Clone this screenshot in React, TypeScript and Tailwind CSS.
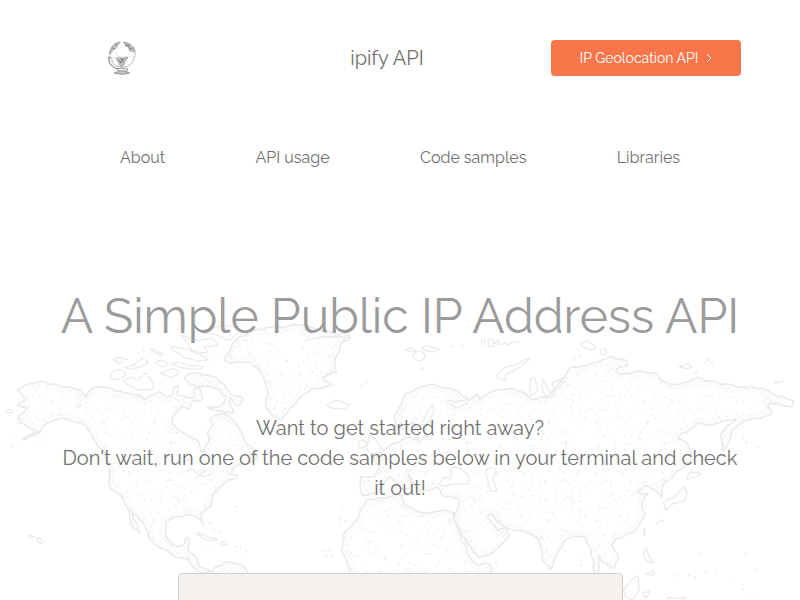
const land: Record<string, string> = {
  northAmerica:
    "50,330 72,318 95,310 125,304 145,313 200,320 245,328 258,350 275,325 300,320 340,326 370,340 400,345 425,345 432,362 445,350 480,335 500,352 520,345 518,325 535,315 530,345 555,350 585,352 580,330 602,325 608,360 575,365 570,388 545,378 520,410 518,435 545,455 590,478 600,500 612,518 628,480 622,460 638,440 630,415 660,403 690,410 715,440 730,480 760,510 778,535 750,548 700,560 690,585 715,588 670,615 640,640 635,680 605,700 612,740 598,715 570,705 520,712 495,725 498,770 520,795 550,795 555,772 568,775 562,805 585,825 595,855 635,877 615,880 585,868 570,845 510,822 450,780 442,750 395,690 405,725 422,762 395,738 385,685 360,645 330,625 326,560 310,510 290,490 260,440 230,425 190,415 150,425 125,440 115,460 65,480 110,455 62,430 55,405 82,385 50,375 75,362",
  southAmerica: "635,880 650,858 690,845 725,852 745,885 750,970 640,970",
  baffin:
    "550,295 560,285 600,278 640,290 670,310 690,340 730,355 712,378 690,352 700,400 620,382 665,378 680,350 650,325 620,320 570,315",
  greenland:
    "670,238 690,215 700,185 740,160 800,142 860,140 890,133 950,148 1052,168 1020,195 1005,240 1012,278 965,290 998,315 930,330 890,365 865,390 845,422 810,402 795,370 805,340 790,290 772,262 740,245 700,250 680,245",
  eurasia:
    "1080,590 1125,592 1140,565 1118,540 1150,510 1180,490 1220,470 1250,480 1290,470 1260,460 1240,425 1215,450 1185,440 1180,410 1205,370 1220,340 1250,325 1300,312 1350,325 1405,355 1370,366 1345,358 1370,385 1400,370 1432,340 1436,362 1470,335 1530,325 1580,340 1600,358 1625,348 1640,355 1670,325 1685,300 1710,262 1750,258 1805,240 1825,230 1880,242 1885,258 1850,265 1860,285 1900,275 1970,278 1980,295 2010,312 2060,308 2090,292 2150,308 2190,315 2250,325 2252,315 2310,335 2355,355 2382,362 2375,382 2335,376 2305,370 2315,405 2270,415 2230,425 2195,450 2190,480 2170,515 2160,465 2180,440 2210,415 2150,430 2120,435 2090,432 2030,475 2065,490 2075,540 2040,570 1990,615 1985,655 1965,630 1940,615 1910,635 1945,642 1925,670 1935,710 1910,750 1850,775 1835,795 1855,830 1845,865 1810,852 1795,825 1795,880 1785,900 1775,815 1755,768 1700,775 1665,830 1652,870 1625,830 1615,775 1590,760 1520,745 1495,725 1470,702 1462,708 1490,752 1515,745 1528,765 1480,820 1435,835 1390,770 1360,715 1372,690 1377,655 1325,648 1315,620 1260,635 1235,600 1225,580 1240,625 1210,630 1170,590 1150,610 1130,640 1085,645",
  africa:
    "1100,658 1205,645 1212,672 1265,697 1325,690 1365,697 1362,718 1390,790 1425,850 1475,855 1468,885 1440,970 1080,970 1052,880 1025,810 1030,765 1065,725 1080,690",
};

const islands = [
  "15,393 28,387 42,393 32,401",
  "65,478 108,456 128,452 102,467",
  "338,240 352,232 376,235 360,249",
  "372,262 400,255 430,235 446,250 420,262 390,268",
  "328,292 340,272 370,270 380,284 352,300",
  "368,300 395,290 410,302 440,278 458,305 460,325 420,332 385,315",
  "450,208 462,206 472,216 492,222 480,228",
  "465,250 480,240 508,252 492,262",
  "478,280 520,265 540,280 515,294",
  "508,200 530,203 560,205 610,230 630,240 590,245 545,228",
  "510,250 540,247 575,258 612,260 600,268 550,265",
  "545,165 580,180 640,175 655,195 610,200 625,218 580,214",
  "605,160 650,140 700,138 720,155 690,182 640,160",
  "588,760 622,770 655,780 622,781",
  "660,790 670,783 686,793 672,796",
  "82,764 95,767 105,773 90,772",
  "108,776 120,772 130,784 124,792 113,786",
  "978,375 1005,360 1050,373 1030,388 1000,386",
  "1072,485 1090,478 1105,492 1082,508",
  "1098,500 1112,465 1130,480 1150,515 1110,520",
  "1214,210 1232,202 1250,210 1238,218",
  "1236,226 1252,212 1270,216 1278,228 1258,244 1246,238",
  "1262,206 1285,196 1300,204 1320,208 1300,216 1280,214",
  "1488,292 1510,265 1560,248 1590,235 1565,260 1515,285 1520,302",
  "1590,295 1605,292 1612,335 1590,350",
  "1632,295 1640,325 1662,345 1640,352 1625,320",
  "1655,308 1680,298 1690,292 1686,318 1662,328",
  "1738,195 1765,180 1792,205 1762,208",
  "1798,212 1818,205 1820,225 1802,224",
  "2035,262 2060,250 2078,262 2060,267",
  "1990,665 2025,650 2050,620 2062,640 2055,662 2020,670 1995,695",
  "2058,600 2070,575 2105,580 2085,592",
  "1930,830 1938,802 1945,825 1962,850 1945,845",
  "1930,745 1938,750 1933,770",
  "1935,882 1965,870 1960,888",
  "1870,925 1900,895 1915,885 1918,925 1900,960 1875,950",
  "1925,938 1950,932 1940,955",
  "2000,950 2030,955 2060,950 2050,962 2010,965",
];

const seas = [
  "1318,612 1335,590 1350,598 1355,560 1385,565 1408,590 1405,610 1360,612 1325,618",
  "1455,570 1480,560 1490,575 1478,595 1492,635 1470,635 1465,600",
  "1252,480 1262,440 1280,400 1300,370 1302,395 1280,430 1275,465 1262,490",
];

const rand = (n: number) => {
  const v = Math.sin(n * 127.1 + 311.7) * 43758.5453;
  return v - Math.floor(v);
};

/** Hand-drawn closed outline: each edge gets shaky in-between points, then all corners are rounded. */
function coast(points: string, wobble: number) {
  const corners = points.split(" ").map((p) => p.split(",").map(Number));
  const pts: number[][] = [];
  corners.forEach(([x, y], i) => {
    const [nx, ny] = corners[(i + 1) % corners.length];
    const length = Math.hypot(nx - x, ny - y);
    const steps = Math.max(1, Math.round(length / 13));
    for (let s = 0; s < steps; s++) {
      const shake = s === 0 ? 0 : wobble;
      const t = s / steps;
      const seed = x * 3 + y * 7 + s;
      pts.push([
        x + (nx - x) * t + (rand(seed) - 0.5) * shake,
        y + (ny - y) * t + (rand(seed + 9) - 0.5) * shake,
      ]);
    }
  });
  const mid = (a: number[], b: number[]) => `${((a[0] + b[0]) / 2).toFixed(1)} ${((a[1] + b[1]) / 2).toFixed(1)}`;
  let d = `M${mid(pts[pts.length - 1], pts[0])}`;
  pts.forEach((p, i) => {
    d += `Q${p[0].toFixed(1)} ${p[1].toFixed(1)} ${mid(p, pts[(i + 1) % pts.length])}`;
  });
  return d + "Z";
}

const landPath = Object.values(land).map((p) => coast(p, 9)).join("");
const islandPath = islands.map((p) => coast(p, 5)).join("");
const seaPath = seas.map((p) => coast(p, 5)).join("");

const dashes = Array.from({ length: 230 }, (_, i) => {
  const x = 6 + rand(i) * 284;
  const y = 6 + rand(i + 500) * 284;
  return `M${x.toFixed(0)} ${y.toFixed(0)}l${(rand(i + 90) * 7 - 2).toFixed(1)} ${(rand(i + 70) * 6 - 2).toFixed(1)}`;
}).join("");

const specks =
  "M30 466h1M52 430h2M38 500h1M120 486h1M380 238h2M415 219h2M430 212h2M705 680h3M628 730h8M640 750h3M655 757h3M624 800h1M706 800h2M720 802h2M738 812v1M737 838v1M1084 318h3M1096 308h4M1265 266h4M1350 198h5M1384 195h3M1028 680h1M1022 716h2M1022 730h2M1036 725h2M974 814h3M990 812h3M976 826h3M992 826h3M1488 846v4M2237 488h5M2272 502h2M2228 474h2M2325 308h12M2346 305h2M1970 730h3M1980 722h8M2095 822h4M2238 821h2M2022 887h2M2066 886h2M2085 892h2M2115 875h2M2150 874h2M2264 868h2M2202 894h1M2228 928h2M2256 950h1M1742 840v1M1744 856v1M2120 240h8M2135 248h3M2085 278h6M1720 235h4M1740 228h4";

function WorldMap() {
  return (
    <svg
      aria-hidden="true"
      viewBox="0 0 2400 960"
      preserveAspectRatio="xMidYMin slice"
      className="absolute inset-x-0 bottom-0 -z-10 w-full"
      fill="none"
      stroke="#ebebeb"
      strokeLinecap="round"
      strokeLinejoin="round"
    >
      <defs>
        <pattern id="stipple" width="296" height="296" patternUnits="userSpaceOnUse">
          <path d={dashes} stroke="#eaeaea" strokeWidth="3" />
        </pattern>
        <pattern id="hatch" width="10" height="10" patternUnits="userSpaceOnUse" patternTransform="rotate(38)">
          <path d="M3 0V10" stroke="#f5f5f5" strokeWidth="3" />
        </pattern>
        <clipPath id="land">
          <path d={landPath} />
        </clipPath>
      </defs>
      <g clipPath="url(#land)">
        <path d={landPath} stroke="url(#hatch)" strokeWidth="36" />
      </g>
      <path d={landPath} fill="url(#stipple)" strokeWidth="5" />
      <path d={islandPath} strokeWidth="4" />
      <path d={seaPath} fill="#ffffff" strokeWidth="4" />
      <path d={specks} strokeWidth="5" />
      <path
        d="M1446 190q-6-14 8-10v16M1466 188a8 8 0 1 0 14 0a8 8 0 1 0-14 0M1486 188q8-12 12 0q-10 10-12 0M1502 192q8 4 14-6l8 8 14-6M1545 186h14M560 575q20-15 30 5 10-20 25-5l-20 10-10 15M598 588q20 5 38-8M232 378h12M915 182q40-16 130-10"
        strokeWidth="4"
      />
    </svg>
  );
}

function Logo() {
  return (
    <svg viewBox="0 0 28 34" className="h-[34px] w-7" fill="none" stroke="#888" strokeWidth="0.7" role="img" aria-label="ipify">
      <path d="M13 1Q5 1 2 9q-1 7 3 12" stroke="#aaa" />
      <path d="M15 1q9 1 12 9 1 8-5 14-6 4-13 1" stroke="#999" />
      <path d="M11 1Q6 3 4 6l-3 7 2-1 2-3 3-2 1-3 3-2z" fill="#c4c4c4" stroke="#999" />
      <path d="M16 1l1 3 3 2 2 4 4 1 1-2Q23 2 16 1z" fill="#c4c4c4" stroke="#999" />
      <path d="M4 7l3 1M7 3l3 2M18 3l5 5M17 5l5-1M21 9l4-2" stroke="#777" />
      <path d="M8 17l4-1 2 1 4-1 2 1-3 3-1 4-3 2-2-3-1-3z" fill="#c0c0c0" stroke="#999" />
      <path d="M9 18l5 4M12 17l4 4M16 17l-4 5" stroke="#666" />
      <path d="M0 16l3 1M1 17q-1 4 2 7 4 4 8 4l8 1" stroke="#777" strokeWidth="1" />
      <path d="M3 20q3 5 8 6" stroke="#aaa" />
      <path d="M9 28q6-2 11 0l-1 2h-8zM6 32q8-4 16 0-8 3-16 0z" fill="#eee" />
      <path d="M8 32h12" stroke="#777" />
      <path d="M3 16q6 3 12 0 6-1 12-1M10 6q-3 5-1 10" stroke="#ddd" />
    </svg>
  );
}

const links = ["About", "API usage", "Code samples", "Libraries"];

export default function App() {
  return (
    <div className="relative isolate h-screen overflow-hidden bg-white font-['Raleway','Lato',sans-serif] text-[#707070]">
      <WorldMap />
      <header>
        <div className="grid grid-cols-3 items-center pr-[59px] pl-[33px] pt-10">
          <a href="#home" className="justify-self-center pr-[58px]">
            <Logo />
          </a>
          <span className="text-center text-xl">ipify API</span>
          <a
            href="#geolocation"
            className="flex h-9 w-[190px] items-center justify-center gap-2 justify-self-end rounded bg-[#f9764b] text-sm text-white"
          >
            IP Geolocation API
            <svg viewBox="0 0 6 10" className="h-[10px] w-[6px]" fill="none" stroke="currentColor" aria-hidden="true">
              <path d="M1 1l4 4-4 4" />
            </svg>
          </a>
        </div>
        <nav className="mt-[70px] flex justify-between px-[120px] text-base">
          {links.map((l) => (
            <a key={l} href="#section">
              {l}
            </a>
          ))}
        </nav>
      </header>
      <main className="mt-[110px] px-[60px] text-center">
        <h1 className="text-5xl leading-[72px] whitespace-nowrap text-[#9b9b9b]">A Simple Public IP Address API</h1>
        <p className="mt-[61px] text-xl leading-[30px]">
          Want to get started right away?
          <br />
          Don't wait, run one of the code samples below in your terminal and check it out!
        </p>
        <div className="mx-auto mt-[70px] h-[200px] w-[445px] rounded border border-[#d0d0d0] bg-[#f5f1ee]" />
      </main>
    </div>
  );
}
